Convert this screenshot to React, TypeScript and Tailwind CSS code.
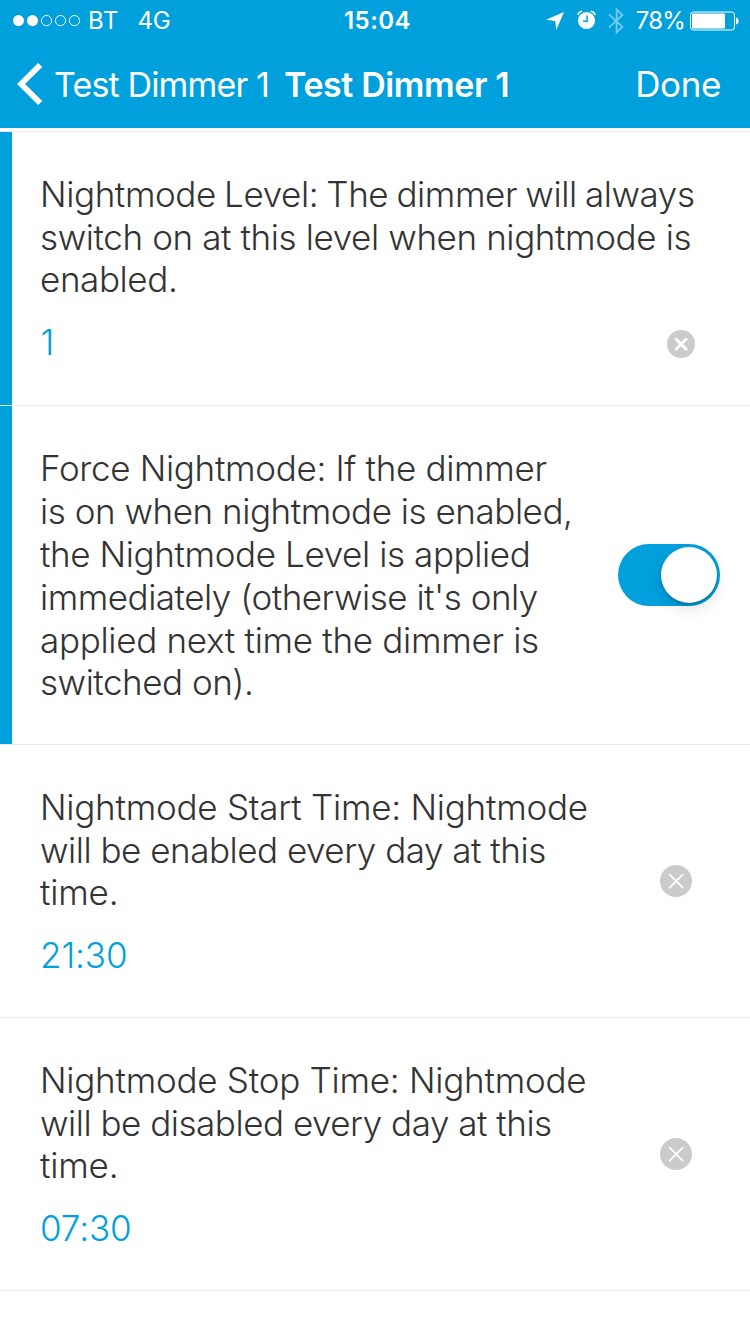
import React from "react";

type Line = { text: string; tracking: string };

function Lines({ lines }: { lines: Line[] }) {
  return (
    <p className="text-[35px] font-light leading-[42.96px] text-[#333333]">
      {lines.map((l) => (
        <span key={l.text} className={`block whitespace-nowrap last:-mt-px ${l.tracking}`}>
          {l.text}
        </span>
      ))}
    </p>
  );
}

function Value({ text, tracking }: { text: string; tracking: string }) {
  return (
    <p className={`mt-[20px] text-[35px] font-light leading-[42.96px] text-[#00a0dd] ${tracking}`}>
      {text}
    </p>
  );
}

function StatusBar() {
  return (
    <div className="grid h-10 grid-cols-[1fr_auto_1fr] items-center pt-[2px] text-[24px] leading-[38px] tracking-[-0.2px]">
      <div className="flex items-center pl-[13px]">
        <svg width="68" height="12" viewBox="0 0 68 12" fill="none" stroke="white" strokeWidth="1">
          <circle cx="5.5" cy="5.6" r="5.5" fill="white" stroke="none" />
          <circle cx="19.5" cy="5.6" r="5.5" fill="white" stroke="none" />
          <circle cx="33.5" cy="5.6" r="5.1" />
          <circle cx="47.5" cy="5.6" r="5.1" />
          <circle cx="61.5" cy="5.6" r="5.1" />
        </svg>
        <span className="ml-[7px] tracking-[0.6px]">BT</span>
        <span className="ml-[18.5px]">4G</span>
      </div>
      <span className="pl-[5px] font-semibold tracking-[0.5px]">15:04</span>
      <div className="flex items-center justify-end pr-[11px]">
        <svg width="18" height="18" viewBox="0 0 18 18" fill="white">
          <path d="M18 0 10.3 18 9.2 9 0 7.8Z" />
        </svg>
        <svg className="-mt-[2px] ml-[13px]" width="20" height="20" viewBox="0 0 20 20" fill="none">
          <circle cx="9.5" cy="10.5" r="8.6" fill="white" />
          <path d="M0.8 5A5 5 0 0 1 5.2 1.3M18.2 5A5 5 0 0 0 13.8 1.3" stroke="white" strokeWidth="1.5" />
          <path d="M10.1 5.5V11.2H6" stroke="#00a0dd" strokeWidth="1.5" />
        </svg>
        <svg className="-mt-px ml-[11px]" width="17" height="28" viewBox="0 0 17 28" fill="none" stroke="#73caed" strokeWidth="1.8">
          <path d="M1 7.3 14.5 20 8.6 25.5V2.5L14.5 8 1 20.7" />
        </svg>
        <span className="ml-[10.5px] tracking-[-0.8px]">78%</span>
        <svg className="-mt-px ml-[5px]" width="49" height="20" viewBox="0 0 49 20" fill="none">
          <rect x="0.5" y="1" width="44" height="18" rx="3" stroke="white" />
          <rect x="2" y="2.5" width="33" height="15" rx="1.3" fill="white" />
          <path d="M46 6.5C49.6 7.5 49.6 12.5 46 13.5Z" fill="white" />
        </svg>
      </div>
    </div>
  );
}

function NavBar() {
  return (
    <div className="flex h-[88px] items-center pl-[17px] pr-[29px]">
      <svg width="26" height="42" viewBox="0 0 26 42" fill="none" stroke="white" strokeWidth="5.8">
        <path d="M23.2 2 4 21 23.2 40" />
      </svg>
      <span className="ml-[11px] w-[230px] whitespace-nowrap text-[34px] tracking-[-0.85px]">Test Dimmer 1</span>
      <span className="whitespace-nowrap text-[34px] font-semibold tracking-[-0.4px]">Test Dimmer 1</span>
      <span className="ml-auto text-[35px] tracking-[-0.4px]">Done</span>
    </div>
  );
}

function Row({ accent, height, children }: { accent?: boolean; height: string; children: React.ReactNode }) {
  return (
    <section className={`flex border-b border-[#eaebec] ${height}`}>
      <div className={`w-3 shrink-0 ${accent ? "bg-[#00a0dd]" : ""}`} />
      <div className="flex flex-1 pl-[28px] pt-[41px]">{children}</div>
    </section>
  );
}

function ClearSmall() {
  return (
    <svg width="28" height="28" viewBox="0 0 28 28" fill="none">
      <circle cx="14" cy="14" r="14" fill="#cbcbcb" />
      <path d="m9 9 10.2 10.2M19.2 9 9 19.2" stroke="white" strokeWidth="2.8" strokeLinecap="round" />
    </svg>
  );
}

function ClearLarge() {
  return (
    <svg width="32" height="32" viewBox="0 0 32 32" fill="none">
      <circle cx="16" cy="16" r="16" fill="#cbcbcb" />
      <path d="m9.7 9.7 13 13M22.7 9.7l-13 13" stroke="white" strokeWidth="1.8" strokeLinecap="round" />
    </svg>
  );
}

export default function App() {
  return (
    <main className="h-[1334px] w-[750px] overflow-hidden bg-white font-['Inter',sans-serif]">
      <header className="h-32 bg-[#00a0dd] text-white">
        <StatusBar />
        <NavBar />
      </header>
      <div className="h-1 border-b border-[#eaebec]" />

      <Row accent height="h-[274px]">
        <div className="w-[627px]">
          <Lines
            lines={[
              { text: "Nightmode Level: The dimmer will always", tracking: "tracking-[-0.4px] [word-spacing:-1.3px]" },
              { text: "switch on at this level when nightmode is", tracking: "tracking-[-0.39px]" },
              { text: "enabled.", tracking: "tracking-[-0.4px]" },
            ]}
          />
          <Value text="1" tracking="pl-[0.5px]" />
        </div>
        <div className="pt-[157px]">
          <ClearSmall />
        </div>
      </Row>

      <Row accent height="h-[339px]">
        <div className="w-[578px]">
          <Lines
            lines={[
              { text: "Force Nightmode: If the dimmer", tracking: "tracking-[-0.32px]" },
              { text: "is on when nightmode is enabled,", tracking: "tracking-[-0.46px]" },
              { text: "the Nightmode Level is applied", tracking: "tracking-[-0.39px]" },
              { text: "immediately (otherwise it's only", tracking: "tracking-[-0.49px]" },
              { text: "applied next time the dimmer is", tracking: "tracking-[-0.3px]" },
              { text: "switched on).", tracking: "tracking-[-0.48px]" },
            ]}
          />
        </div>
        <div className="pt-[97px]">
          <div className="flex h-[62px] w-[102px] items-center justify-end rounded-full bg-[#00a0dd] pr-[3px]">
            <div className="size-[56px] rounded-full bg-white shadow-[0_6px_16px_rgba(0,0,0,0.12),0_2px_3px_rgba(0,0,0,0.2)]" />
          </div>
        </div>
      </Row>

      <Row height="h-[273px]">
        <div className="w-[620px]">
          <Lines
            lines={[
              { text: "Nightmode Start Time: Nightmode", tracking: "tracking-[-0.24px]" },
              { text: "will be enabled every day at this", tracking: "tracking-[-0.48px]" },
              { text: "time.", tracking: "tracking-[-0.2px]" },
            ]}
          />
          <Value text="21:30" tracking="tracking-[-0.1px]" />
        </div>
        <div className="pt-[79px]">
          <ClearLarge />
        </div>
      </Row>

      <Row height="h-[273px]">
        <div className="w-[620px]">
          <Lines
            lines={[
              { text: "Nightmode Stop Time: Nightmode", tracking: "tracking-[-0.25px]" },
              { text: "will be disabled every day at this", tracking: "tracking-[-0.48px]" },
              { text: "time.", tracking: "tracking-[-0.2px]" },
            ]}
          />
          <Value text="07:30" tracking="tracking-[-0.1px]" />
        </div>
        <div className="pt-[79px]">
          <ClearLarge />
        </div>
      </Row>
    </main>
  );
}
